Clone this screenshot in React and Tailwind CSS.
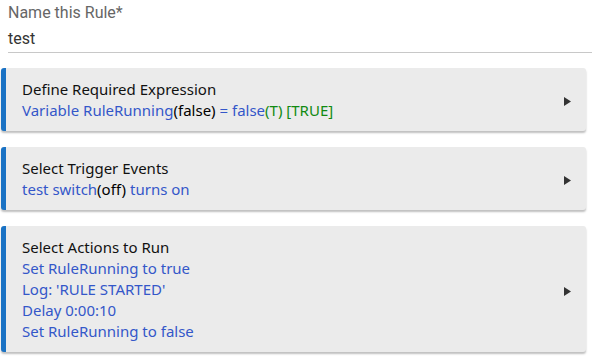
const Blue = ({ children }) => <span className="text-[#3457c9]">{children}</span>;
const Green = ({ children }) => <span className="text-[#118a11]">{children}</span>;

const Card = ({ title, children }) => (
  <div className="flex items-center bg-[#ebebeb] border-l-[5px] border-[#1a72c4] rounded-[3px] shadow-[0_2px_2px_rgba(0,0,0,0.25)] pl-4 pr-[15px] pt-[11px] pb-[10px]">
    <div className="flex-1 leading-[21px]">
      <div className="text-[#111]">{title}</div>
      {children}
    </div>
    <svg width="7" height="9" viewBox="0 0 7 9" className="mt-[3px]">
      <path d="M0 0 L7 4.5 L0 9 Z" fill="#333" />
    </svg>
  </div>
);

export default function App() {
  return (
    <div className="w-[592px] h-[357px] bg-white overflow-hidden font-['Noto_Sans',sans-serif] text-[15px]">
      <div className="pl-2 pt-[2px] font-['Roboto',sans-serif]">
        <div className="text-[#666] text-[16px] leading-[22px]">Name this Rule*</div>
        <div className="text-[#333] text-[16px] leading-[22px] mt-[4px] pb-[2px] border-b border-[#c8c8c8]">test</div>
      </div>
      <div className="flex flex-col gap-4 pl-[1px] pr-[6px] mt-[15px]">
        <Card title="Define Required Expression">
          <div>
            <Blue>Variable RuleRunning</Blue>(false) <Blue>= false</Blue>
            <Green>(T) [TRUE]</Green>
          </div>
        </Card>
        <Card title="Select Trigger Events">
          <div>
            <Blue>test switch</Blue>(off) <Blue>turns on</Blue>
          </div>
        </Card>
        <Card title="Select Actions to Run">
          <div className="text-[#3457c9]">
            <div>Set RuleRunning to true</div>
            <div>Log: 'RULE STARTED'</div>
            <div>Delay 0:00:10</div>
            <div>Set RuleRunning to false</div>
          </div>
        </Card>
      </div>
    </div>
  );
}
